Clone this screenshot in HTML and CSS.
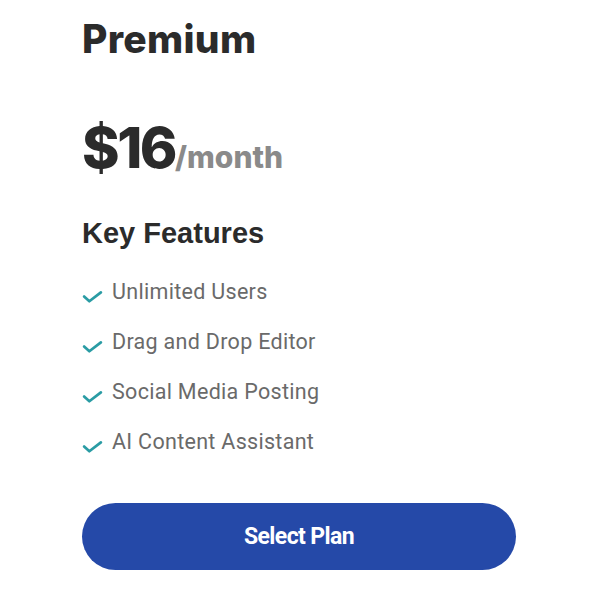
FILE: index.html
```html
<!DOCTYPE html>
<html lang="en">
<head>
  <meta charset="UTF-8" />
  <meta name="viewport" content="width=device-width, initial-scale=1.0"/>
  <title>Premium Plan</title>
  <link rel="stylesheet" href="styles.css">
</head>
<body>

  <div class="plan-card">
    <h2 class="plan-name">Premium</h2>

    <div class="plan-price">
      <span class="amount">$16</span><span class="period">/month</span>
    </div>

    <h3 class="features-title">Key Features</h3>
    <ul class="features">
      <li>
        <svg class="check" viewBox="0 0 20 20"><path d="M2 11l5 4.5L18 7"/></svg>
        Unlimited Users
      </li>
      <li>
        <svg class="check" viewBox="0 0 20 20"><path d="M2 11l5 4.5L18 7"/></svg>
        Drag and Drop Editor
      </li>
      <li>
        <svg class="check" viewBox="0 0 20 20"><path d="M2 11l5 4.5L18 7"/></svg>
        Social Media Posting
      </li>
      <li>
        <svg class="check" viewBox="0 0 20 20"><path d="M2 11l5 4.5L18 7"/></svg>
        AI Content Assistant
      </li>
    </ul>

    <button class="select-btn">Select Plan</button>
  </div>

</body>
</html>
```

FILE: styles.css
```css
:root {
  --text-dark: #2b2b2b;
  --text-muted: #8a8a8a;
  --feature-text: #6a6a6a;
  --check-color: #2a9ca4;
  --button-color: #2549a8;
}

body {
  margin: 0;
  background: #ffffff;
  font-family: "Roboto", "Liberation Sans", sans-serif;
}

.plan-card {
  padding: 14px 84px 0 82px;
}

.plan-name {
  margin: 0;
  font-family: "Inter", sans-serif;
  font-weight: 800;
  font-size: 39px;
  line-height: 50px;
  letter-spacing: 0.3px;
  color: var(--text-dark);
}

.plan-price {
  margin-top: 52px;
  display: flex;
  align-items: baseline;
  color: var(--text-dark);
}

.plan-price .amount {
  font-family: "Inter", sans-serif;
  font-weight: 800;
  font-size: 57px;
  line-height: 64px;
  letter-spacing: -2.5px;
}

.plan-price .period {
  font-family: "Inter", sans-serif;
  font-weight: 800;
  font-size: 30px;
  color: var(--text-muted);
}

.features-title {
  margin: 33px 0 0;
  font-family: "Liberation Sans", Arial, sans-serif;
  font-weight: bold;
  font-size: 29px;
  line-height: 40px;
  color: var(--text-dark);
}

.features {
  list-style: none;
  margin: 13px 0 0;
  padding: 0;
}

.features li {
  display: flex;
  align-items: center;
  gap: 9px;
  height: 50px;
  font-size: 21.5px;
  letter-spacing: 0.3px;
  color: var(--feature-text);
}

.check {
  width: 21px;
  height: 21px;
  margin-top: 8px;
  fill: none;
  stroke: var(--check-color);
  stroke-width: 2.6;
  stroke-linecap: round;
  stroke-linejoin: round;
}

.select-btn {
  display: block;
  width: 100%;
  height: 67px;
  margin-top: 37px;
  border: none;
  border-radius: 34px;
  background-color: var(--button-color);
  color: #ffffff;
  font-family: "Roboto", sans-serif;
  font-weight: bold;
  font-size: 23px;
  letter-spacing: -0.6px;
  cursor: pointer;
}
```
